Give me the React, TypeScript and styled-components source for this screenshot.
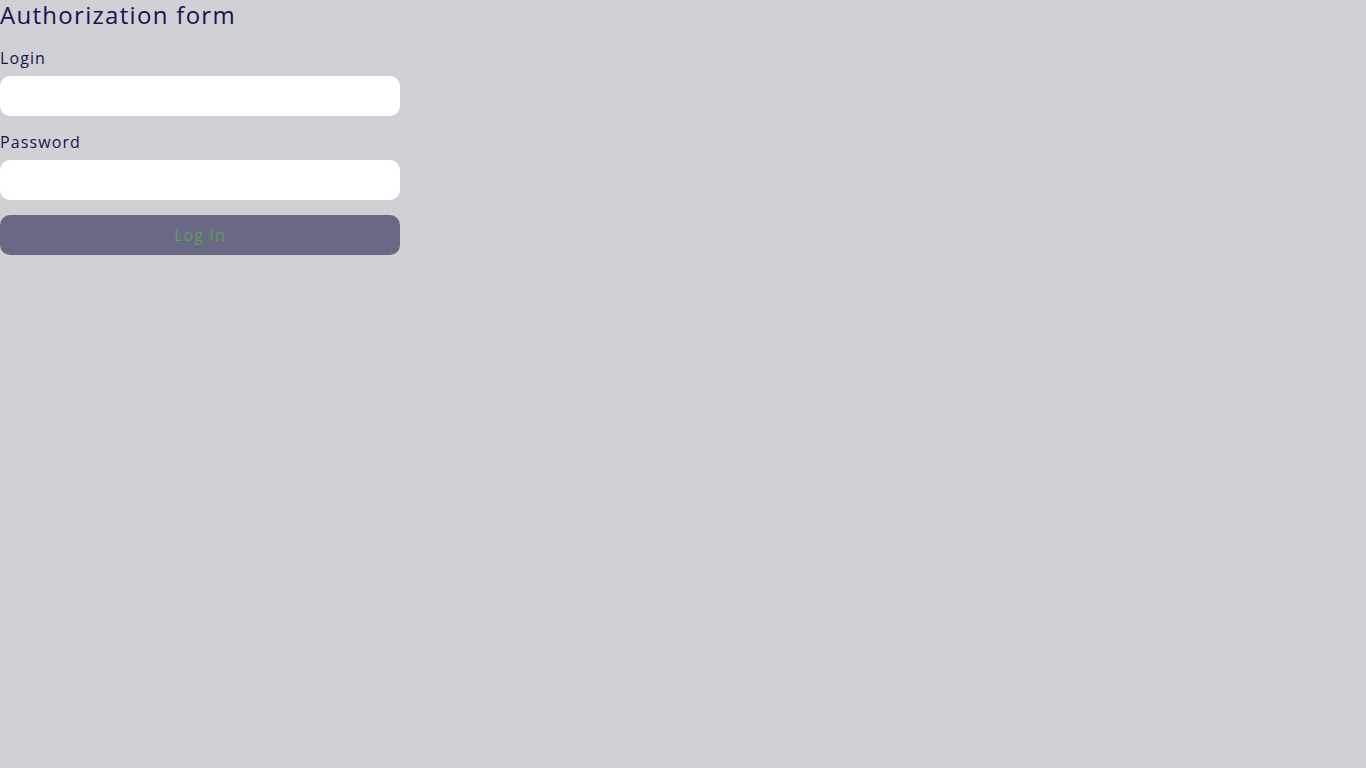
import React from 'react';
import styled, { createGlobalStyle } from 'styled-components';

const GlobalStyle = createGlobalStyle`
	html, body {
		margin: 0;
		padding: 0;
		background: #d1d0d5;
		min-height: 100%;
	}
	body {
		font-family: 'Open Sans', 'DejaVu Sans', sans-serif;
		color: #1b1252;
	}
`;

const Form = styled.form`
	display: flex;
	flex-direction: column;
	width: 400px;
`;

const Title = styled.h1`
	margin: 0;
	font-size: 24px;
	font-weight: 400;
	line-height: 30px;
	letter-spacing: 1.3px;
`;

const Label = styled.label<{ $top: number }>`
	margin-top: ${(p) => p.$top}px;
	margin-bottom: 8px;
	font-size: 16px;
	line-height: 20px;
	letter-spacing: 1.1px;
`;

const Input = styled.input`
	box-sizing: border-box;
	width: 400px;
	height: 40px;
	border: none;
	border-radius: 10px;
	background: #ffffff;
	padding: 0 12px;
	font: inherit;
	outline: none;
`;

const Button = styled.button`
	box-sizing: border-box;
	margin-top: 15px;
	width: 400px;
	height: 40px;
	border: none;
	border-radius: 10px;
	background: #6a6985;
	color: #5c9c5c;
	font-family: inherit;
	font-size: 16px;
	letter-spacing: 1.1px;
	cursor: pointer;
`;

const App = () => {
	return (
		<>
			<GlobalStyle />
			<Form onSubmit={(e) => e.preventDefault()}>
				<Title>Authorization form</Title>
				<Label $top={18} htmlFor="login">Login</Label>
				<Input id="login" type="text" />
				<Label $top={16} htmlFor="password">Password</Label>
				<Input id="password" type="password" />
				<Button type="submit">Log In</Button>
			</Form>
		</>
	);
};

export default App;
